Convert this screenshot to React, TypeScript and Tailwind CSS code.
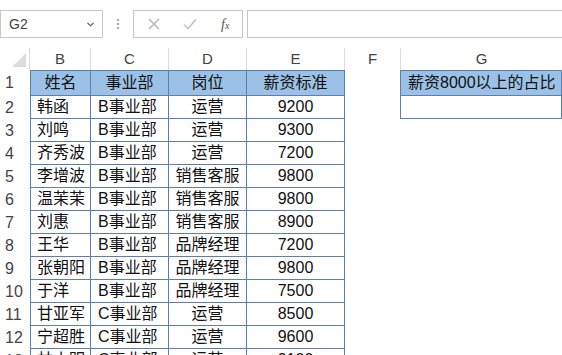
import { ChevronDown } from 'lucide-react'

// 表格数据
const rows = [
  ['韩函', 'B事业部', '运营', '9200'],
  ['刘鸣', 'B事业部', '运营', '9300'],
  ['齐秀波', 'B事业部', '运营', '7200'],
  ['李增波', 'B事业部', '销售客服', '9800'],
  ['温茉茉', 'B事业部', '销售客服', '9800'],
  ['刘惠', 'B事业部', '销售客服', '8900'],
  ['王华', 'B事业部', '品牌经理', '7200'],
  ['张朝阳', 'B事业部', '品牌经理', '9800'],
  ['于洋', 'B事业部', '品牌经理', '7500'],
  ['甘亚军', 'C事业部', '运营', '8500'],
  ['宁超胜', 'C事业部', '运营', '9600'],
  ['林小明', 'C事业部', '运营', '9100'],
]

const font = { fontFamily: '"Liberation Sans", "Noto Sans CJK SC", sans-serif' }

function FormulaBar() {
  return (
    <div className="flex h-[48px] items-start pt-[10px]">
      {/* 名称框 */}
      <div className="relative flex h-[28px] w-[103px] items-center border border-[#c6c6c6] pl-[8px] text-[14px] text-[#444]">
        G2
        <ChevronDown className="absolute right-[6px] top-[8px] h-[11px] w-[11px] text-[#666]" strokeWidth={3} />
      </div>
      <div className="flex h-[28px] w-[30px] flex-col items-center justify-center gap-[2px]">
        <span className="h-[2px] w-[2px] bg-[#aaa]" />
        <span className="h-[2px] w-[2px] bg-[#aaa]" />
        <span className="h-[2px] w-[2px] bg-[#aaa]" />
      </div>
      {/* 取消 / 确认 / 插入函数 */}
      <div className="flex h-[28px] w-[110px] items-center border border-[#c6c6c6]">
        <svg className="ml-[14px]" width="12" height="12" viewBox="0 0 12 12">
          <path d="M1 1 L11 11 M11 1 L1 11" stroke="#b3b3b3" strokeWidth="1.4" fill="none" />
        </svg>
        <svg className="ml-[23px]" width="14" height="12" viewBox="0 0 14 12">
          <path d="M1 6.5 L5 10.5 L13 1.5" stroke="#c4c4c4" strokeWidth="1.6" fill="none" />
        </svg>
        <span
          className="ml-[24px] text-[14px] italic text-[#555]"
          style={{ fontFamily: '"Liberation Serif", serif' }}
        >
          f<span className="text-[10px]">x</span>
        </span>
      </div>
      <div className="ml-[4px] h-[28px] flex-1 border-y border-l border-[#c6c6c6]" />
    </div>
  )
}

const cols = ['w-[61px]', 'w-[78px]', 'w-[78px]', 'w-[98px]']

export default function App() {
  return (
    <div className="h-screen w-[562px] overflow-hidden bg-white text-[#111]" style={font}>
      <FormulaBar />

      {/* 列标题 */}
      <div className="flex h-[22px] text-[15px] text-[#444]">
        <div className="relative w-[30px] border-r border-[#dadada]">
          <div
            className="absolute bottom-[3px] right-[3px] h-[14px] w-[14px] bg-[#dcdcdc]"
            style={{ clipPath: 'polygon(100% 0, 100% 100%, 0 100%)' }}
          />
        </div>
        {['B', 'C', 'D', 'E'].map((c, i) => (
          <div key={c} className={`${cols[i]} flex items-center justify-center border-r border-[#dadada]`}>
            {c}
          </div>
        ))}
        <div className="flex w-[56px] items-center justify-center border-r border-[#dadada]">F</div>
        <div className="flex flex-1 items-center justify-center">G</div>
      </div>

      {/* 第 1 行：表头 */}
      <div className="flex h-[26px] text-[16px]">
        <div className="flex w-[30px] items-center pl-[5px] text-[#444]">1</div>
        <div className="flex border-y border-l border-[#5b7fae] bg-[#9bc2e6]">
          <div className="flex w-[60px] items-center justify-center border-r border-[#5b7fae]">姓名</div>
          <div className="flex w-[78px] items-center justify-center border-r border-[#5b7fae]">事业部</div>
          <div className="flex w-[78px] items-center justify-center border-r border-[#5b7fae]">岗位</div>
          <div className="flex w-[98px] items-center justify-center border-r border-[#5b7fae]">薪资标准</div>
        </div>
        <div className="w-[55px]" />
        <div className="flex flex-1 items-center border border-[#5b7fae] bg-[#9bc2e6] pl-[7px]">
          薪资8000以上的占比
        </div>
      </div>

      {/* 数据行 */}
      {rows.map((r, i) => (
        <div key={i} className="flex h-[23px] text-[16px]">
          <div className="flex w-[30px] items-center pl-[5px] text-[#444]">{i + 2}</div>
          <div className="flex border-b border-l border-[#5b7fae]">
            <div className="flex w-[60px] items-center border-r border-[#5b7fae] pl-[6px]">{r[0]}</div>
            <div className="flex w-[78px] items-center border-r border-[#5b7fae] pl-[7px]">{r[1]}</div>
            <div className="flex w-[78px] items-center justify-center border-r border-[#5b7fae]">{r[2]}</div>
            <div className="flex w-[98px] items-center justify-center border-r border-[#5b7fae]">{r[3]}</div>
          </div>
          <div className="w-[55px]" />
          {i === 0 && <div className="flex-1 border-x border-b border-[#5b7fae]" />}
        </div>
      ))}
    </div>
  )
}
